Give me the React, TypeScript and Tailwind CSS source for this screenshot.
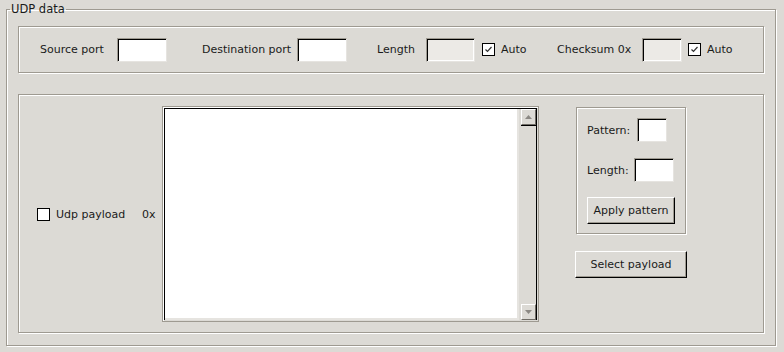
import React from 'react';

const groove = 'border border-[#9e9a91] shadow-[1px_1px_0_#ffffff,inset_1px_1px_0_#ffffff]';

function Entry({ className = '', disabled = false }: { className?: string; disabled?: boolean }) {
  return (
    <div
      className={`h-[24px] shrink-0 border border-t-[#9e9a91] border-l-[#9e9a91] border-b-[#e6e4e0] border-r-[#e6e4e0] shadow-[inset_1px_1px_0_#000000,inset_-1px_-1px_0_#ffffff] ${
        disabled ? 'bg-[#eceae6]' : 'bg-white'
      } ${className}`}
    />
  );
}

function Check({ checked = false }: { checked?: boolean }) {
  return (
    <div className="flex h-[13px] w-[13px] shrink-0 items-center justify-center border border-black bg-white">
      {checked && (
        <svg width="9" height="9" viewBox="0 0 9 9">
          <path d="M1.5 4.5 L3.5 6.5 L7.5 2" fill="none" stroke="#333" strokeWidth="1.2" />
        </svg>
      )}
    </div>
  );
}

function Button({ label, className = '' }: { label: string; className?: string }) {
  return (
    <div
      className={`flex h-[27px] shrink-0 items-center justify-center border border-t-white border-l-white border-b-black border-r-black bg-[#dcdad5] shadow-[inset_-1px_-1px_0_#9e9a91] ${className}`}
    >
      {label}
    </div>
  );
}

function ScrollArrow({ up }: { up: boolean }) {
  return (
    <div className="flex h-[16px] w-full shrink-0 items-center justify-center border border-t-white border-l-white border-b-[#6f6c66] border-r-[#6f6c66]">
      <svg width="7" height="4" viewBox="0 0 7 4">
        <path d={up ? 'M0 4 L3.5 0 L7 4 Z' : 'M0 0 L3.5 4 L7 0 Z'} fill="#8c8984" />
      </svg>
    </div>
  );
}

export default function App() {
  return (
    <div
      className="h-[352px] w-[784px] overflow-hidden bg-[#dcdad5] text-[11px] leading-none text-[#1a1a1a]"
      style={{ fontFamily: '"DejaVu Sans", Tahoma, sans-serif' }}
    >
      <fieldset className={`ml-[6px] mt-[3px] h-[343px] w-[770px] px-0 pt-[10px] ${groove}`}>
        <legend className="ml-[3px] px-[1px] text-[11.5px] leading-[13px]">UDP data</legend>

        {/* Top row: ports, length, checksum */}
        <div className={`ml-[11px] flex h-[47px] w-[746px] items-center pl-[21px] ${groove}`}>
          <span className="w-[77px] shrink-0">Source port</span>
          <Entry className="w-[50px]" />
          <span className="ml-[35px] w-[95px] shrink-0">Destination port</span>
          <Entry className="w-[50px]" />
          <span className="ml-[30px] w-[49px] shrink-0">Length</span>
          <Entry className="w-[49px]" disabled />
          <div className="ml-[7px]">
            <Check checked />
          </div>
          <span className="ml-[6px] w-[26px] shrink-0">Auto</span>
          <span className="ml-[30px] w-[85px] shrink-0">Checksum 0x</span>
          <Entry className="w-[40px]" disabled />
          <div className="ml-[6px]">
            <Check checked />
          </div>
          <span className="ml-[6px]">Auto</span>
        </div>

        {/* Payload */}
        <div className={`ml-[11px] mt-[21px] flex h-[239px] w-[746px] items-start pl-[18px] pt-[11px] ${groove}`}>
          <div className="flex h-[216px] items-center">
            <Check />
            <span className="ml-[6px] w-[86px] shrink-0">Udp payload</span>
            <span className="w-[20px] shrink-0">0x</span>
          </div>

          <div className="flex h-[216px] w-[377px] shrink-0 border border-[#9e9a91] bg-[#dcdad5] p-[1px] shadow-[inset_1px_1px_0_#ffffff]">
            <div className="flex flex-1 border-l border-t border-l-black border-t-black bg-white">
              <div className="flex-1 border-b-2 border-r-2 border-b-[#e6e4e0] border-r-[#e6e4e0]" />
              <div className="w-[2px] bg-[#dcdad5]" />
              <div className="flex w-[16px] flex-col border-r border-r-black bg-[#dcdad5]">
                <ScrollArrow up />
                <div className="flex-1 border-t border-t-black" />
                <ScrollArrow up={false} />
              </div>
            </div>
          </div>

          <div className="ml-[37px] mt-[1px] flex flex-col">
            <div className={`flex h-[127px] w-[110px] flex-col pl-[10px] pt-[10px] ${groove}`}>
              <div className="flex items-center">
                <span className="w-[50px] shrink-0">Pattern:</span>
                <Entry className="w-[30px]" />
              </div>
              <div className="mt-[16px] flex items-center">
                <span className="w-[47px] shrink-0">Length:</span>
                <Entry className="h-[23px] w-[40px]" />
              </div>
              <Button label="Apply pattern" className="mt-[15px] w-[88px]" />
            </div>
            <Button label="Select payload" className="-ml-[1px] mt-[17px] w-[112px]" />
          </div>
        </div>
      </fieldset>
    </div>
  );
}
